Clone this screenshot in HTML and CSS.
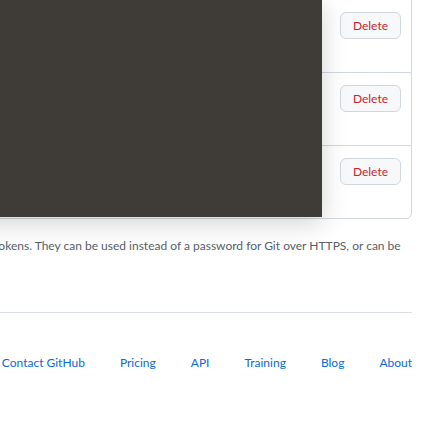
FILE: index.html
```html
<!DOCTYPE html>
<html>
<head>
<meta charset="utf-8">
<link rel="stylesheet" href="styles.css">
</head>
<body>
<div class="page">
  <section class="tokens">
    <div class="token-box">
      <div class="token-row">
        <button class="btn-delete">Delete</button>
      </div>
      <div class="token-row">
        <button class="btn-delete">Delete</button>
      </div>
      <div class="token-row">
        <button class="btn-delete">Delete</button>
      </div>
    </div>
    <div class="overlay"></div>
  </section>
  <p class="note">Personal access tokens function like ordinary OAuth access tokens. They can be used instead of a password for Git over HTTPS, or can be used to authenticate to the API over Basic Authentication.</p>
  <footer class="footer">
    <nav class="footer-links">
      <a href="#">Contact GitHub</a>
      <a href="#">Pricing</a>
      <a href="#">API</a>
      <a href="#">Training</a>
      <a href="#">Blog</a>
      <a href="#">About</a>
    </nav>
  </footer>
</div>
</body>
</html>
```

FILE: styles.css
```css
html, body {
  margin: 0;
  padding: 0;
  background: #ffffff;
  overflow: hidden;
}

body {
  font-family: Lato, "Liberation Sans", sans-serif;
  font-size: 12px;
  color: #1f2328;
}

.page {
  width: 731px;
  margin-left: -319px;
}

.tokens {
  position: relative;
}

.token-box {
  margin-top: -1px;
  border: 1px solid #d0d7de;
  border-radius: 0 0 6px 6px;
}

.token-row {
  box-sizing: border-box;
  height: 73px;
  padding: 12px 10px 0 16px;
  display: flex;
  justify-content: flex-end;
  align-items: flex-start;
  border-top: 1px solid #d0d7de;
}

.token-row:first-child {
  border-top: none;
  height: 72px;
}

.btn-delete {
  font-family: Lato, "Liberation Sans", sans-serif;
  font-size: 12px;
  line-height: 19px;
  padding: 3px 12px;
  color: #cf222e;
  background: #f6f8fa;
  border: 1px solid #d0d7de;
  border-radius: 6px;
}

.overlay {
  position: absolute;
  left: 0;
  top: 0;
  width: 641px;
  height: 218px;
  background: #3f3b37;
  box-shadow: 0 6px 24px rgba(0, 0, 0, 0.18);
}

.note {
  margin: 18px 0 0;
  line-height: 18px;
  color: #57606a;
}

.footer {
  margin-top: 39px;
  border-top: 1px solid #d8dee4;
  padding-top: 41px;
}

.footer-links {
  display: flex;
  justify-content: flex-end;
  gap: 35px;
}

.footer-links a {
  color: #0969da;
  text-decoration: none;
  line-height: 18px;
}
```
